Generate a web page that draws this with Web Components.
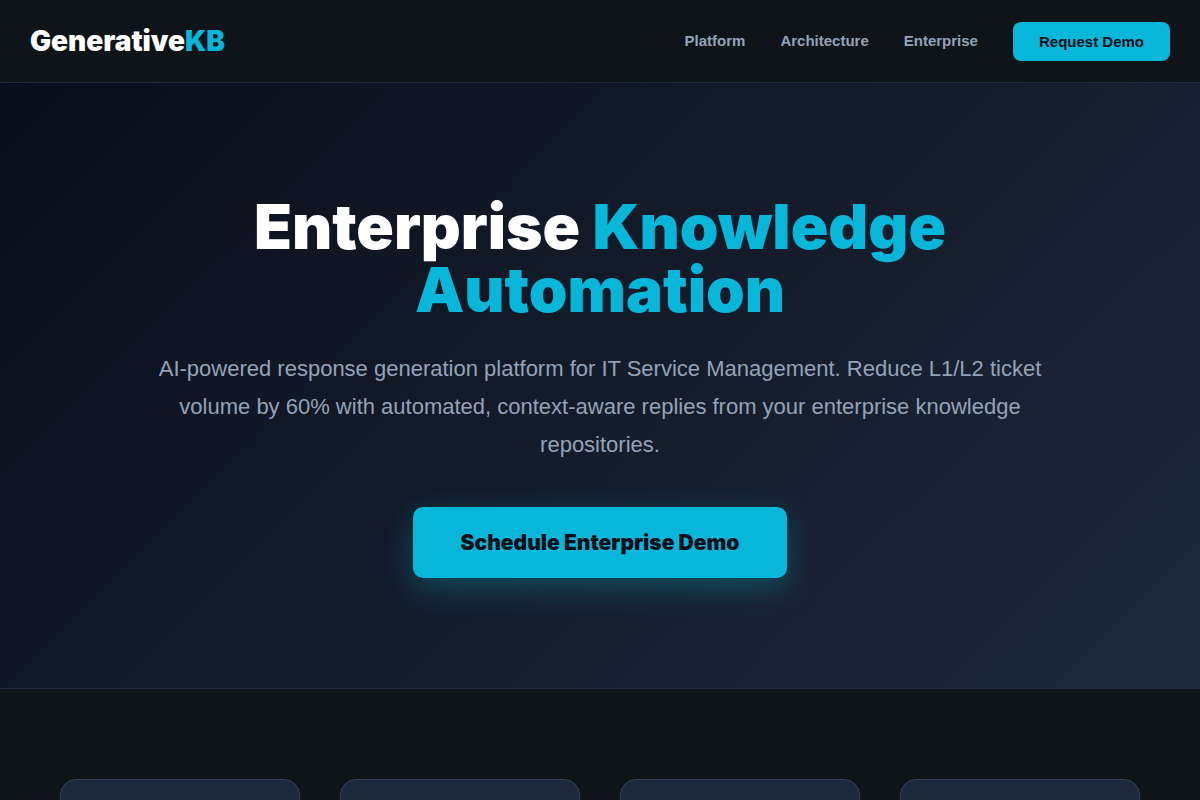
<!DOCTYPE html>
<html lang="en">
<head>
<meta charset="utf-8">
<meta name="viewport" content="width=device-width, initial-scale=1">
<title>GenerativeKB</title>
<style>
  :root {
    --accent: #07b6d8;
    --ink: #0a0e1a;
    --muted: #94a3b8;
    --surface: #0f1419;
    --line: #1e293b;
    --body-font: "Liberation Sans", Arial, sans-serif;
    --display-font: "Arial Black", Inter, sans-serif;
  }
  body { margin: 0; background: var(--surface); color: #fff; font-family: var(--body-font); }
</style>
</head>
<body>
<kb-header>
  <kb-logo slot="logo"></kb-logo>
  <kb-nav-link href="#platform">Platform</kb-nav-link>
  <kb-nav-link href="#architecture">Architecture</kb-nav-link>
  <kb-nav-link href="#enterprise">Enterprise</kb-nav-link>
  <kb-button>Request Demo</kb-button>
</kb-header>
<main>
  <kb-hero>
    <span slot="title">Enterprise</span>
    <span slot="highlight">Knowledge</span>
    <span slot="highlight-end">Automation</span>
    AI-powered response generation platform for IT Service Management. Reduce L1/L2 ticket volume by 60% with automated, context-aware replies from your enterprise knowledge repositories.
    <kb-button slot="action" size="large">Schedule Enterprise Demo</kb-button>
  </kb-hero>
  <kb-card-grid>
    <kb-card></kb-card>
    <kb-card></kb-card>
    <kb-card></kb-card>
    <kb-card></kb-card>
  </kb-card-grid>
</main>
<script>
  function define(name, markup, setup) {
    const template = document.createElement("template");
    template.innerHTML = markup;
    customElements.define(name, class extends HTMLElement {
      constructor() {
        super();
        this.attachShadow({ mode: "open" }).append(template.content.cloneNode(true));
      }
      connectedCallback() {
        if (setup) setup(this);
      }
    });
  }

  define("kb-header", `
    <style>
      :host { display: block; background: var(--surface); border-bottom: 1px solid var(--line); }
      header { display: flex; flex-wrap: wrap; align-items: center; justify-content: space-between; gap: 20px; padding: 20px 30px; }
      nav { display: flex; flex-wrap: wrap; align-items: center; gap: 35px; }
    </style>
    <header><slot name="logo"></slot><nav aria-label="Main"><slot></slot></nav></header>`);

  define("kb-logo", `
    <style>
      :host { display: block; }
      a { display: block; color: #fff; text-decoration: none; font: 900 28px/42px var(--display-font); }
      span { color: var(--accent); }
    </style>
    <a href="#">Generative<span>KB</span></a>`);

  define("kb-nav-link", `
    <style>
      :host { display: block; }
      a { color: var(--muted); text-decoration: none; font: 700 15px/18px var(--body-font); }
      a:hover { color: var(--accent); }
    </style>
    <a><slot></slot></a>`,
    host => { host.shadowRoot.querySelector("a").href = host.getAttribute("href"); });

  define("kb-button", `
    <style>
      :host { display: inline-block; }
      button { display: block; margin: 0; border: 0; border-radius: 8px; padding: 11px 26px; background: var(--accent); color: var(--ink); font: 700 15px/17px var(--body-font); cursor: pointer; }
      :host([size="large"]) button { border-radius: 10px; padding: 22px 48px; font: 900 21px/27px var(--display-font); box-shadow: 0 10px 30px rgba(6, 182, 212, 0.3); }
    </style>
    <button type="button"><slot></slot></button>`);

  define("kb-hero", `
    <style>
      :host { display: block; border-bottom: 1px solid var(--line); background: linear-gradient(135deg, #0a0e1a, #1e293b); }
      section { display: flex; flex-direction: column; align-items: center; padding: 112px 30px 110px; text-align: center; }
      h1 { max-width: 900px; margin: 0 0 29px; font: 900 62px/63px var(--display-font); }
      em { font-style: normal; color: var(--accent); }
      p { max-width: 900px; margin: 0 0 43px; color: var(--muted); font-size: 22px; line-height: 38px; }
    </style>
    <section>
      <h1><slot name="title"></slot> <em><slot name="highlight"></slot> <slot name="highlight-end"></slot></em></h1>
      <p><slot></slot></p>
      <slot name="action"></slot>
    </section>`);

  define("kb-card-grid", `
    <style>
      :host { display: block; padding: 90px 60px; }
      div { display: grid; grid-template-columns: repeat(auto-fit, minmax(220px, 1fr)); gap: 40px; max-width: 1200px; margin: 0 auto; }
    </style>
    <div><slot></slot></div>`);

  define("kb-card", `
    <style>
      :host { display: block; box-sizing: border-box; min-height: 240px; padding: 40px; border: 1px solid #334155; border-radius: 16px; background: #1e293b; }
    </style>
    <slot></slot>`);
</script>
</body>
</html>
